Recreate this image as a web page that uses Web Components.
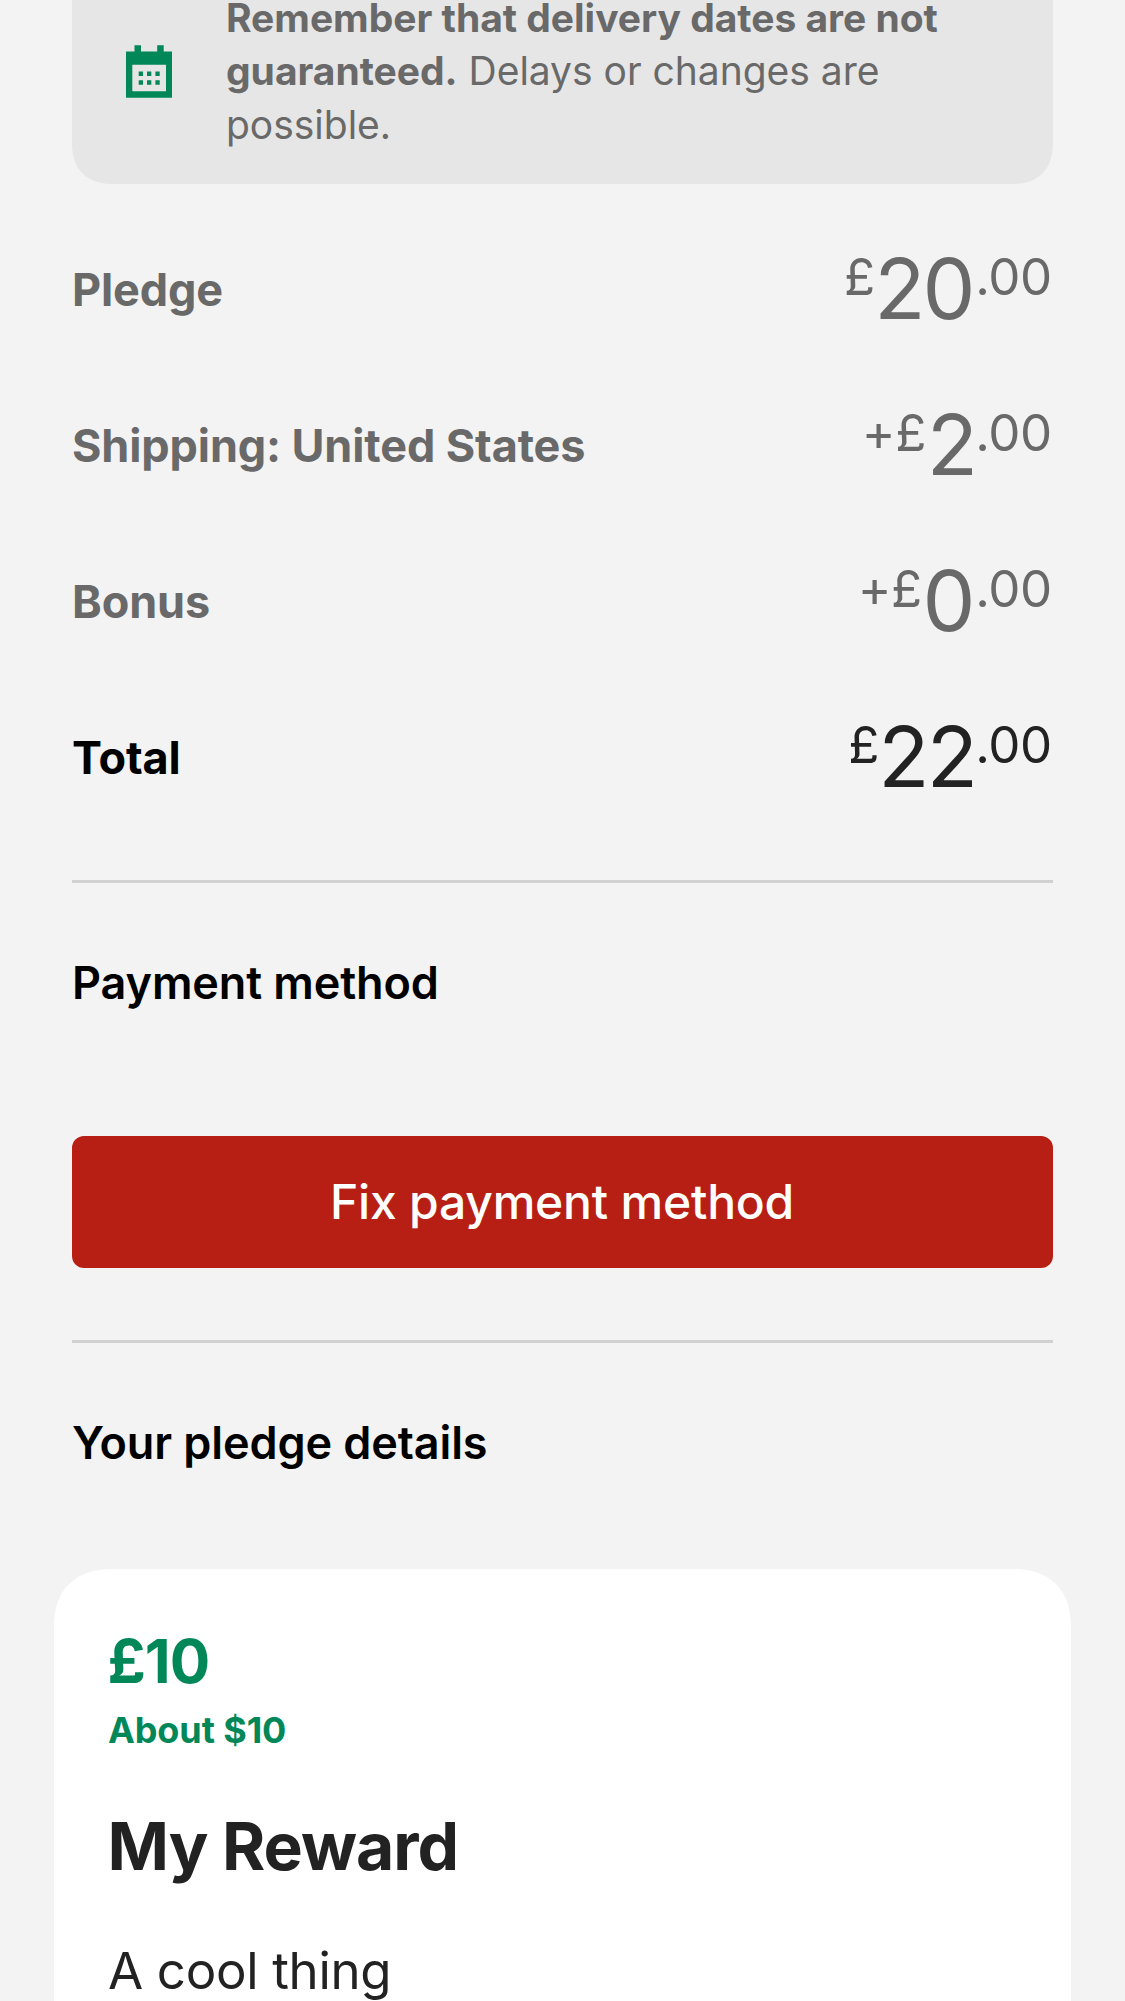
<!DOCTYPE html>
<html lang="en">
<head>
<meta charset="utf-8">
<title>Your pledge</title>
<style>
html,body{margin:0;height:2001px;overflow:hidden;background:#f3f3f3}
body{font-family:Inter,sans-serif;color:#222}
</style>
</head>
<body>
<pledge-screen>
  <delivery-notice><b>Remember that delivery dates are not guaranteed.</b> Delays or changes are possible.</delivery-notice>
  <pledge-summary>
    <summary-row prefix="£" whole="20" cents=".00">Pledge</summary-row>
    <summary-row prefix="+£" whole="2" cents=".00">Shipping: United States</summary-row>
    <summary-row prefix="+£" whole="0" cents=".00">Bonus</summary-row>
    <summary-row total prefix="£" whole="22" cents=".00">Total</summary-row>
  </pledge-summary>
  <screen-section style="--gap:126px">
    <span slot="title">Payment method</span>
    <action-button>Fix payment method</action-button>
  </screen-section>
  <screen-section style="--gap:99px">
    <span slot="title">Your pledge details</span>
    <reward-card>
      <span slot="price">£10</span>
      <span slot="converted">About $10</span>
      <span slot="name">My Reward</span>
      <span slot="description">A cool thing</span>
    </reward-card>
  </screen-section>
</pledge-screen>
<script>
const define = (name, html, setup) => {
  const tpl = document.createElement('template');
  tpl.innerHTML = html;
  customElements.define(name, class extends HTMLElement {
    constructor() {
      super();
      this.attachShadow({ mode: 'open' }).append(tpl.content.cloneNode(true));
    }
    connectedCallback() { if (setup) setup(this, this.shadowRoot); }
  });
};

define('pledge-screen', `
<style>
:host{display:flex;flex-direction:column;height:2001px;padding:0 72px;box-sizing:border-box;overflow:hidden}
::slotted(*){flex:none}
</style><slot></slot>`);

define('delivery-notice', `
<style>
:host{display:flex;align-items:center;gap:54px;box-sizing:border-box;height:226px;margin-top:-42px;padding:0 54px;
background:#e6e6e6;color:#696969;border-radius:42px;corner-shape:superellipse(1.26);font-size:39px;line-height:53.3px;letter-spacing:-.02px}
svg{flex:none;display:block}
p{margin:0;flex:1}
::slotted(b){font-weight:700}
</style>
<svg width="46" height="53" viewBox="0 0 46 53" fill="#028858" aria-hidden="true">
<path fill-rule="evenodd" d="M0 6.4H8.5V.2H15V6.4H31.2V.2H37.7V6.4H46V52.8H0ZM6.3 19.7V46.3H40V19.7Z"/>
<path d="M12.7 26.5H17V31H12.7ZM21 26.5H25.3V31H21ZM29.4 26.5H33.7V31H29.4ZM12.7 35.3H17V39.8H12.7ZM21 35.3H25.3V39.8H21ZM29.4 35.3H33.7V39.8H29.4Z"/>
</svg>
<p><slot></slot></p>`);

define('pledge-summary', `
<style>:host{display:flex;flex-direction:column;margin-top:28px;padding-bottom:44px}</style><slot></slot>`);

define('summary-row', `
<style>
:host{display:flex;align-items:center;justify-content:space-between;height:156px;color:#696969}
.label{font-size:45px;line-height:54px;font-weight:700;letter-spacing:-.12px}
.amount{display:flex;align-items:flex-start;padding:0 1px 3px 0}
.small{font-size:51px;line-height:66px;letter-spacing:-.3px}
.whole{font-size:84px;line-height:90px;letter-spacing:-2.8px}
:host([whole$="0"]) .whole{margin-right:2.4px}
:host([total]) .label{color:#000}
:host([total]) .amount{color:#222}
.prefix{margin-right:.6px}
</style>
<span class="label"><slot></slot></span>
<span class="amount"><span class="small prefix"></span><span class="whole"></span><span class="small cents"></span></span>`,
(el, root) => {
  for (const k of ['prefix', 'whole', 'cents']) root.querySelector('.' + k).textContent = el.getAttribute(k);
  if (el.getAttribute('prefix') === '£') root.querySelector('.prefix').style.marginRight = '-.8px';
});

define('screen-section', `
<style>
:host{display:flex;flex-direction:column;border-top:3px solid #d1d1d1;padding-top:73px}
:host(:nth-of-type(1)){padding-bottom:72px}
h2{margin:0 0 var(--gap);font-size:45px;line-height:54px;font-weight:600;letter-spacing:-.1px;color:#000}
</style>
<h2><slot name="title"></slot></h2><slot></slot>`);

define('action-button', `
<style>
:host{display:flex}
button{flex:1;height:132px;border:0;padding:0 1px 0 0;border-radius:12px;background:#b81f14;color:#fff;font:500 48px/58px Inter,sans-serif;letter-spacing:-.2px}
</style>
<button type="button"><slot></slot></button>`);

define('reward-card', `
<style>
:host{display:flex;flex-direction:column;margin:0 -18px;padding:56px 54px 120px;background:#fff;border-radius:60px;corner-shape:superellipse(1.26)}
.price{margin-left:-.5px;font-size:60px;line-height:72px;font-weight:700;letter-spacing:-1px;color:#028858}
.converted{margin-top:10.5px;font-size:36px;line-height:44px;font-weight:700;letter-spacing:-.1px;color:#028858}
.name{margin:54px 0 0 -.5px;font-size:66px;line-height:80px;font-weight:700;letter-spacing:-1px}
.description{margin-top:54.5px;font-size:51px;line-height:62px;letter-spacing:-.33px}
</style>
<div class="price"><slot name="price"></slot></div>
<div class="converted"><slot name="converted"></slot></div>
<div class="name"><slot name="name"></slot></div>
<div class="description"><slot name="description"></slot></div>`);
</script>
</body>
</html>
